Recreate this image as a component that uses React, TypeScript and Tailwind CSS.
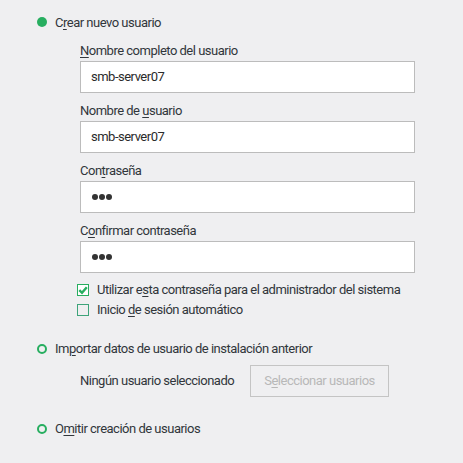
import React from "react";

const U = ({ children }: { children: React.ReactNode }) => (
  <span className="underline decoration-1 underline-offset-2">{children}</span>
);

function Field({ label, value }: { label: React.ReactNode; value: string }) {
  return (
    <div className="flex flex-col">
      <div className="h-[18px] leading-[18px]">{label}</div>
      <div className="mt-[1px] h-[32px] w-[335px] border border-[#bcbcbc] bg-white flex items-center pl-[10px] text-[#2b2b2b]">
        {value}
      </div>
    </div>
  );
}

function Dots() {
  return (
    <span className="flex gap-[1px] items-center">
      <span className="w-[6px] h-[6px] rounded-full bg-[#333]" />
      <span className="w-[6px] h-[6px] rounded-full bg-[#333]" />
      <span className="w-[6px] h-[6px] rounded-full bg-[#333]" />
    </span>
  );
}

function PwField({ label }: { label: React.ReactNode }) {
  return (
    <div className="flex flex-col">
      <div className="h-[18px] leading-[18px]">{label}</div>
      <div className="mt-[1px] h-[32px] w-[335px] border border-[#bcbcbc] bg-white flex items-center pl-[11px]">
        <Dots />
      </div>
    </div>
  );
}

export default function App() {
  return (
    <div
      className="w-[463px] h-[463px] bg-[#efeff1] text-[#31363b] text-[13px] tracking-[-0.5px] leading-[20px] pt-[13px]"
      style={{ fontFamily: "Roboto, 'Liberation Sans', sans-serif" }}
    >
      <div className="flex items-center h-[20px] pl-[37px]">
        <span className="w-[10px] h-[10px] rounded-full bg-[#27ae60] -mt-[2px]" />
        <span className="ml-[8px]">
          C<U>r</U>ear nuevo usuario
        </span>
      </div>

      <div className="pl-[80px] mt-[9px] flex flex-col gap-[9px]">
        <Field label={<><U>N</U>ombre completo del usuario</>} value="smb-server07" />
        <Field label={<>Nombre de <U>u</U>suario</>} value="smb-server07" />
        <PwField label={<>Con<U>t</U>raseña</>} />
        <PwField label={<>C<U>o</U>nfirmar contraseña</>} />
      </div>

      <div className="pl-[77px] mt-[7px] flex flex-col">
        <div className="flex items-center h-[20px]">
          <span className="w-[12px] h-[12px] border border-[#27ae60] bg-white flex items-center justify-center">
            <svg width="10" height="10" viewBox="0 0 10 10">
              <path d="M1.3 5.2 L4 7.8 L8.8 2.2" fill="none" stroke="#27ae60" strokeWidth="2.4" />
            </svg>
          </span>
          <span className="ml-[8px]">
            Utilizar e<U>s</U>ta contraseña para el administrador del sistema
          </span>
        </div>
        <div className="flex items-center h-[20px]">
          <span className="w-[12px] h-[12px] border border-[#3da47a]" />
          <span className="ml-[8px]">
            Inicio <U>d</U>e sesión automático
          </span>
        </div>
      </div>

      <div className="flex items-center h-[20px] pl-[37px] mt-[19px]">
        <span className="w-[10px] h-[10px] rounded-full border-2 border-[#27ae60]" />
        <span className="ml-[8px]">
          Im<U>p</U>ortar datos de usuario de instalación anterior
        </span>
      </div>

      <div className="flex items-center pl-[80px] mt-[6px]">
        <span className="w-[153px] shrink-0 whitespace-nowrap">Ningún usuario seleccionado</span>
        <div className="ml-[17px] shrink-0 whitespace-nowrap w-[139px] h-[32px] border border-[#c4c4c4] flex items-center justify-center text-[#b8b8b8]">
          S<U>e</U>leccionar usuarios
        </div>
      </div>

      <div className="flex items-center h-[20px] pl-[37px] mt-[22px]">
        <span className="w-[10px] h-[10px] rounded-full border-2 border-[#27ae60]" />
        <span className="ml-[8px]">
          O<U>m</U>itir creación de usuarios
        </span>
      </div>
    </div>
  );
}
